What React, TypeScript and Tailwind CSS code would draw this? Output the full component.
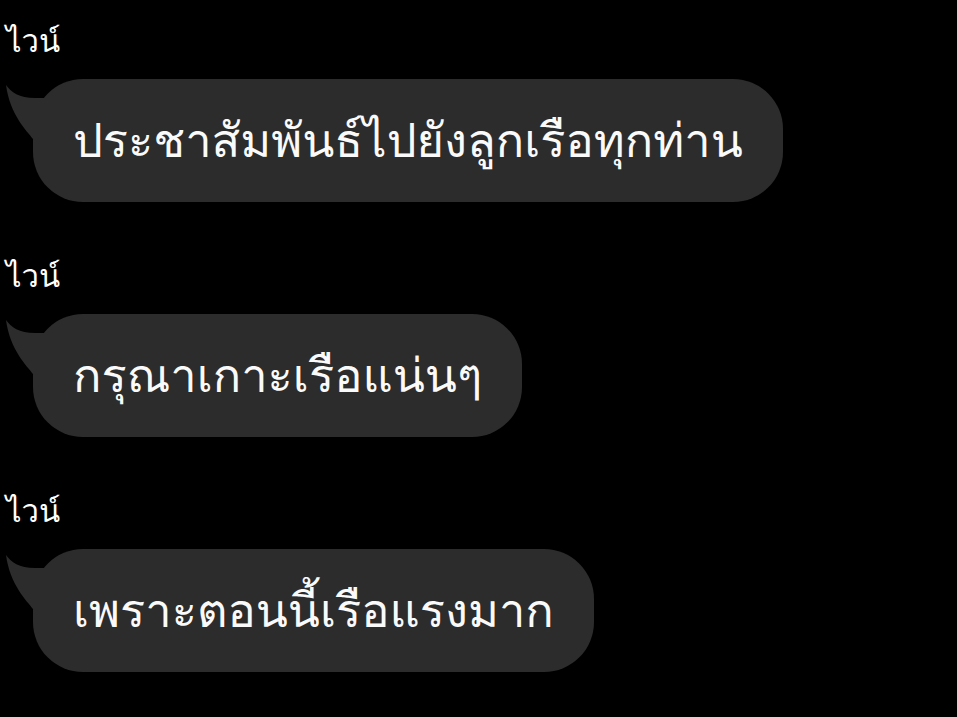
import React from "react";

const msgs = [
  "ประชาสัมพันธ์ไปยังลูกเรือทุกท่าน",
  "กรุณาเกาะเรือแน่นๆ",
  "เพราะตอนนี้เรือแรงมาก",
];

function Tail() {
  return (
    <svg
      className="absolute left-[-28px] top-[4px]"
      width="60"
      height="60"
      viewBox="0 0 60 60"
    >
      <path
        d="M1 2 C 6 9, 14 15, 30 15 L 50 15 L 50 58 L 28 56 C 22 48, 5 32, 1 2 Z"
        fill="#2c2c2c"
      />
    </svg>
  );
}

export default function App() {
  return (
    <div
      className="w-[957px] h-[717px] bg-black text-white overflow-hidden"
      style={{ fontFamily: 'Loma, "DejaVu Sans", sans-serif' }}
    >
      <div className="flex flex-col pt-[17px]">
        {msgs.map((m, i) => (
          <div key={i} className="flex flex-col items-start mb-[50px]">
            <div className="pl-[6px] text-[31px] leading-[48px] h-[62px]">ไวน์</div>
            <div className="relative ml-[33px] h-[123px] rounded-[50px] bg-[#2c2c2c] pl-[40px] pr-[40px] flex items-center">
              <Tail />
              <span className="relative text-[47px] leading-none text-[#fafafa]">{m}</span>
            </div>
          </div>
        ))}
      </div>
    </div>
  );
}
